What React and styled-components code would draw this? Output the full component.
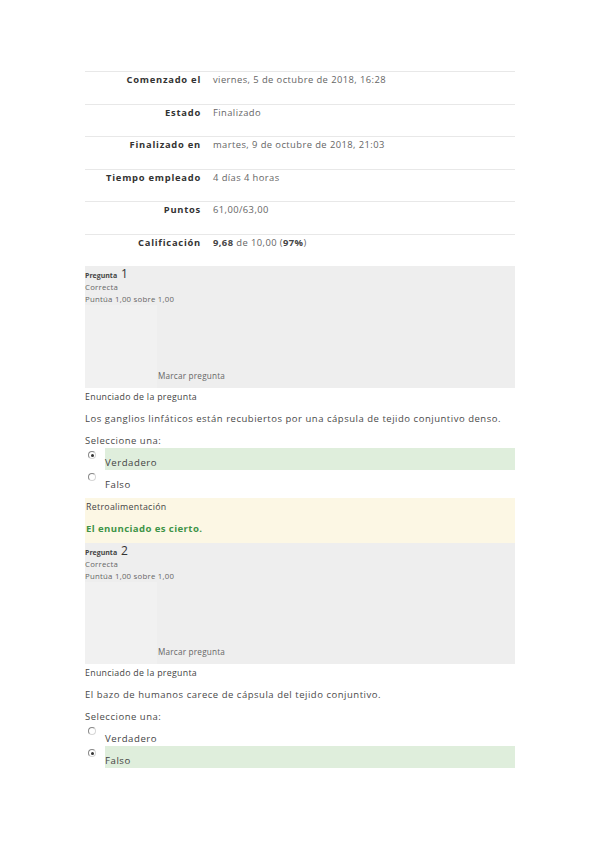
import React from "react";
import styled, { createGlobalStyle } from "styled-components";

const Global = createGlobalStyle`
  html, body { margin: 0; padding: 0; background: #fff; }
  body { font-family: "Open Sans", "Noto Sans", sans-serif; color: #333; }
  * { box-sizing: border-box; }
`;

const Page = styled.div`
  width: 599px;
  min-height: 848px;
  padding: 71px 84px 0 85px;
`;

const Summary = styled.div`
  display: flex;
  flex-direction: column;
`;

const SumRow = styled.div`
  display: grid;
  grid-template-columns: 116px 1fr;
  column-gap: 12px;
  height: 32.5px;
  border-top: 1px solid #e8e8e8;
  padding-top: 1px;
  font-size: 9.4px;
  line-height: 14px;
`;

const SumLabel = styled.div`
  text-align: right;
  font-weight: 700;
  color: #333;
  letter-spacing: 0.75px;
`;

const SumValue = styled.div`
  color: #666;
  font-size: 9.4px;
  letter-spacing: 0.42px;
  b { color: #444; font-weight: 700; }
`;

const QInfo = styled.div`
  background: #eeeeee;
  height: ${(p) => p.$h}px;
  display: flex;
  flex-direction: column;
`;

const QHead = styled.div`
  padding: 2px 0 0 0;
  font-size: 7.8px;
  line-height: 11.5px;
  color: #666;
  letter-spacing: 0.25px;
`;

const QNo = styled.div`
  font-size: 7px;
  font-weight: 700;
  color: #444;
  line-height: 12px;
  letter-spacing: 0;
  span { font-size: 12px; font-weight: 400; color: #333; margin-left: 2px; }
`;

const QBottom = styled.div`
  flex: 1;
  display: flex;
  align-items: flex-end;
`;

const QSide = styled.div`
  width: 72px;
  align-self: stretch;
  background: #f1f1f1;
`;

const Flag = styled.div`
  font-size: 8.2px;
  color: #666;
  padding: 0 0 7px 1px;
  line-height: 10px;
  letter-spacing: 0.2px;
`;

const Small = styled.div`
  font-size: 8.8px;
  color: #444;
  line-height: 14px;
  padding-top: 2px;
  letter-spacing: 0.3px;
`;

const QText = styled.div`
  font-size: 9.5px;
  color: #4a4a4a;
  line-height: 14px;
  margin-top: 8px;
  letter-spacing: 0.52px;
`;

const AnswerRow = styled.div`
  display: flex;
  height: 22px;
  background: ${(p) => (p.$correct ? "#dfeedc" : "transparent")};
`;

const RadioCell = styled.div`
  width: 20px;
  background: #fff;
  padding: 3px 0 0 3px;
`;

const Radio = styled.div`
  width: 8px;
  height: 8px;
  border-radius: 50%;
  border: 1px solid #888;
  border-right-color: #d6d6d6;
  border-bottom-color: #d6d6d6;
  display: flex;
  align-items: center;
  justify-content: center;
  &::after {
    content: "";
    width: 3px;
    height: 3px;
    border-radius: 50%;
    background: ${(p) => (p.$checked ? "#333" : "transparent")};
  }
`;

const AnswerLabel = styled.div`
  font-size: 9.6px;
  color: #444;
  padding-top: 8px;
  line-height: 14px;
  letter-spacing: 0.55px;
`;

const Feedback = styled.div`
  background: #fcf7e4;
  height: 45px;
  margin-top: 6px;
  padding: 2px 0 0 1px;
`;

const FbTitle = styled.div`
  font-size: 8.8px;
  color: #444;
  line-height: 14px;
  letter-spacing: 0.3px;
`;

const FbText = styled.div`
  font-size: 9.6px;
  font-weight: 700;
  color: #3e9448;
  line-height: 14px;
  margin-top: 8px;
  letter-spacing: 0.4px;
`;

const summary = [
  ["Comenzado el", "viernes, 5 de octubre de 2018, 16:28"],
  ["Estado", "Finalizado"],
  ["Finalizado en", "martes, 9 de octubre de 2018, 21:03"],
  ["Tiempo empleado", "4 días 4 horas"],
  ["Puntos", "61,00/63,00"],
];

function Question({ n, h, text, correctIdx }) {
  return (
    <>
      <QInfo $h={h}>
        <QHead>
          <QNo>
            Pregunta <span>{n}</span>
          </QNo>
          <div>Correcta</div>
          <div>Puntúa 1,00 sobre 1,00</div>
        </QHead>
        <QBottom>
          <QSide />
          <Flag>Marcar pregunta</Flag>
        </QBottom>
      </QInfo>
      <Small>Enunciado de la pregunta</Small>
      <QText>{text}</QText>
      <QText>Seleccione una:</QText>
      {["Verdadero", "Falso"].map((a, i) => (
        <AnswerRow key={a} $correct={i === correctIdx}>
          <RadioCell>
            <Radio $checked={i === correctIdx} />
          </RadioCell>
          <AnswerLabel>{a}</AnswerLabel>
        </AnswerRow>
      ))}
    </>
  );
}

export default function App() {
  return (
    <Page>
      <Global />
      <Summary>
        {summary.map(([l, v]) => (
          <SumRow key={l}>
            <SumLabel>{l}</SumLabel>
            <SumValue>{v}</SumValue>
          </SumRow>
        ))}
        <SumRow>
          <SumLabel>Calificación</SumLabel>
          <SumValue>
            <b>9,68</b> de 10,00 (<b>97%</b>)
          </SumValue>
        </SumRow>
      </Summary>
      <Question
        n="1"
        h={122}
        text="Los ganglios linfáticos están recubiertos por una cápsula de tejido conjuntivo denso."
        correctIdx={0}
      />
      <Feedback>
        <FbTitle>Retroalimentación</FbTitle>
        <FbText>El enunciado es cierto.</FbText>
      </Feedback>
      <Question
        n="2"
        h={121}
        text="El bazo de humanos carece de cápsula del tejido conjuntivo."
        correctIdx={1}
      />
    </Page>
  );
}
